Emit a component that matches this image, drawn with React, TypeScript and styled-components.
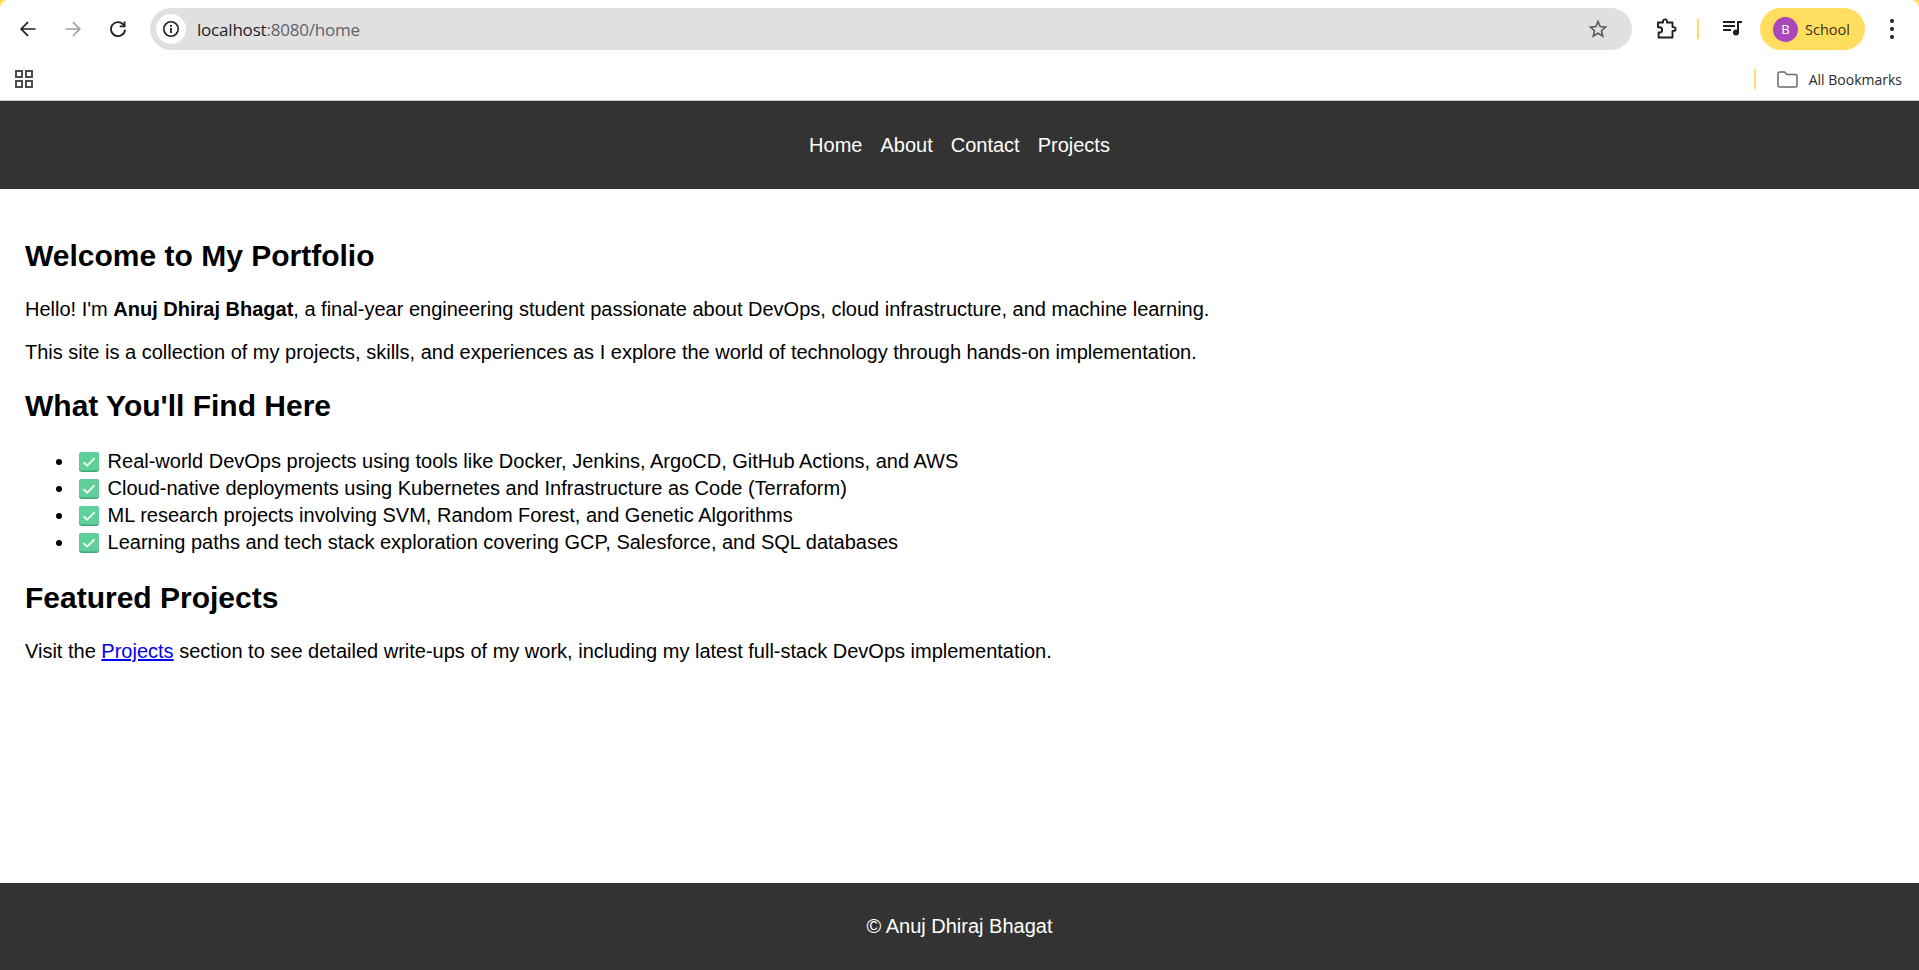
import styled, { createGlobalStyle } from "styled-components";

const GlobalStyle = createGlobalStyle`
  html, body {
    margin: 0;
    padding: 0;
    height: 100%;
    background: #fff;
  }
  body {
    font-family: "Liberation Sans", Arial, sans-serif;
    overflow: hidden;
  }
  * {
    box-sizing: border-box;
  }
`;

const features = [
  "Real-world DevOps projects using tools like Docker, Jenkins, ArgoCD, GitHub Actions, and AWS",
  "Cloud-native deployments using Kubernetes and Infrastructure as Code (Terraform)",
  "ML research projects involving SVM, Random Forest, and Genetic Algorithms",
  "Learning paths and tech stack exploration covering GCP, Salesforce, and SQL databases",
];

const navLinks = ["Home", "About", "Contact", "Projects"];

function CheckEmoji() {
  return (
    <EmojiBox>
      <svg width="20" height="20" viewBox="0 0 20 20">
        <rect x="0" y="0" width="20" height="20" rx="3" fill="#3fa77a" />
        <rect x="0" y="0" width="20" height="18.5" rx="3" fill="#5fd09a" />
        <path d="M4.5 10.2 L8.2 13.6 L15.5 6.2" fill="none" stroke="#e6f7ee" strokeWidth="2" />
      </svg>
    </EmojiBox>
  );
}

export default function App() {
  return (
    <Page>
      <GlobalStyle />
      <Chrome>
        <CornerLeft />
        <CornerRight />
        <Toolbar>
          <NavButtons>
            <IconSlot>
              <svg width="20" height="20" viewBox="0 0 20 20" fill="none" stroke="#1f1f1f" strokeWidth="1.7">
                <path d="M17.5 10H3.5M10 3.2 3.2 10l6.8 6.8" />
              </svg>
            </IconSlot>
            <IconSlot>
              <svg width="20" height="20" viewBox="0 0 20 20" fill="none" stroke="#a3a3a3" strokeWidth="1.7">
                <path d="M2.5 10h14M10 3.2l6.8 6.8-6.8 6.8" />
              </svg>
            </IconSlot>
            <IconSlot>
              <svg width="20" height="20" viewBox="0 0 20 20" fill="none" stroke="#1f1f1f" strokeWidth="1.8">
                <path d="M15.8 6.2A7 7 0 1 0 17 10.6" />
                <path d="M16.6 2.4v4.9h-4.9" />
              </svg>
            </IconSlot>
          </NavButtons>
          <Omnibox>
            <InfoBadge>
              <svg width="18" height="18" viewBox="0 0 18 18" fill="none">
                <circle cx="9" cy="9" r="7.2" stroke="#1f1f1f" strokeWidth="1.6" />
                <rect x="8.1" y="8" width="1.8" height="5" fill="#1f1f1f" />
                <rect x="8.1" y="5" width="1.8" height="1.8" fill="#1f1f1f" />
              </svg>
            </InfoBadge>
            <UrlText>
              localhost<UrlMuted>:8080/home</UrlMuted>
            </UrlText>
            <StarSlot>
              <svg width="20" height="20" viewBox="0 0 20 20" fill="none" stroke="#5a5a5a" strokeWidth="1.6">
                <path d="M10 2.6l2.2 5 5.4.5-4.1 3.6 1.2 5.3L10 14.2 5.3 17l1.2-5.3L2.4 8.1l5.4-.5z" />
              </svg>
            </StarSlot>
          </Omnibox>
          <ToolbarRight>
            <ExtensionSlot>
              <svg width="22" height="22" viewBox="0 0 22 22" fill="none" stroke="#1f1f1f" strokeWidth="1.9" strokeLinejoin="round">
                <path d="M3 4.5h5V3.4a2 2 0 0 1 4 0v1.1h5.5v4.6h1.2a1.9 1.9 0 0 1 0 3.8h-1.2V19.5H3.6v-5a0 0 0 0 0 0 0h.9a2.6 2.6 0 0 0 0-5.2H3z" />
              </svg>
            </ExtensionSlot>
            <YellowDivider />
            <MediaSlot>
              <svg width="20" height="20" viewBox="0 0 20 20" fill="#1f1f1f">
                <rect x="0" y="3" width="12" height="2" />
                <rect x="0" y="7" width="12" height="2" />
                <rect x="0" y="11" width="8" height="2" />
                <rect x="14" y="3" width="2" height="11" />
                <rect x="14" y="3" width="5" height="2" />
                <circle cx="13" cy="14.5" r="3" />
              </svg>
            </MediaSlot>
            <ProfilePill>
              <Avatar>B</Avatar>
              <ProfileName>School</ProfileName>
            </ProfilePill>
            <MenuDots>
              <Dot />
              <Dot />
              <Dot />
            </MenuDots>
          </ToolbarRight>
        </Toolbar>
        <BookmarksBar>
          <svg width="18" height="18" viewBox="0 0 18 18" fill="none" stroke="#444" strokeWidth="1.9">
            <rect x="1" y="1" width="6" height="6" />
            <rect x="11" y="1" width="6" height="6" />
            <rect x="1" y="11" width="6" height="6" />
            <rect x="11" y="11" width="6" height="6" />
          </svg>
          <BookmarksRight>
            <BookmarkDivider />
            <svg width="21" height="17" viewBox="0 0 21 17" fill="none" stroke="#6a6a6a" strokeWidth="1.5">
              <path d="M1 2.6a1.6 1.6 0 0 1 1.6-1.6h5l2.2 2.4h8.6A1.6 1.6 0 0 1 20 5v9.4a1.6 1.6 0 0 1-1.6 1.6H2.6A1.6 1.6 0 0 1 1 14.4z" />
            </svg>
            <BookmarkLabel>All Bookmarks</BookmarkLabel>
          </BookmarksRight>
        </BookmarksBar>
      </Chrome>
      <Site>
        <TopNav>
          {navLinks.map((link) => (
            <NavLink key={link}>{link}</NavLink>
          ))}
        </TopNav>
        <Main>
          <Heading>Welcome to My Portfolio</Heading>
          <Para>
            Hello! I'm <strong>Anuj Dhiraj Bhagat</strong>, a final-year engineering student passionate about DevOps,
            cloud infrastructure, and machine learning.
          </Para>
          <Para>
            This site is a collection of my projects, skills, and experiences as I explore the world of technology
            through hands-on implementation.
          </Para>
          <Heading>What You'll Find Here</Heading>
          <FeatureList>
            {features.map((item) => (
              <FeatureItem key={item}>
                <CheckEmoji /> {item}
              </FeatureItem>
            ))}
          </FeatureList>
          <Heading>Featured Projects</Heading>
          <Para>
            Visit the <ProjectLink href="#">Projects</ProjectLink> section to see detailed write-ups of my work,
            including my latest full-stack DevOps implementation.
          </Para>
        </Main>
        <Footer>© Anuj Dhiraj Bhagat</Footer>
      </Site>
    </Page>
  );
}

const Page = styled.div`
  display: flex;
  flex-direction: column;
  height: 970px;
`;

const Chrome = styled.header`
  position: relative;
  height: 101px;
  background: #fff;
  border-bottom: 1px solid #c9c9c9;
  font-family: "Open Sans", "Noto Sans", sans-serif;
`;

const CornerLeft = styled.div`
  position: absolute;
  top: 0;
  left: 0;
  width: 8px;
  height: 8px;
  background: radial-gradient(circle at 100% 100%, transparent 7.5px, #ffdd5e 8px);
`;

const CornerRight = styled.div`
  position: absolute;
  top: 0;
  right: 0;
  width: 8px;
  height: 8px;
  background: radial-gradient(circle at 0 100%, transparent 7.5px, #ffdd5e 8px);
`;

const Toolbar = styled.div`
  display: flex;
  align-items: center;
  height: 58px;
  padding-left: 5px;
`;

const NavButtons = styled.div`
  display: flex;
  width: 145px;
`;

const IconSlot = styled.div`
  display: flex;
  align-items: center;
  justify-content: center;
  width: 45px;
  height: 30px;
`;

const Omnibox = styled.div`
  display: flex;
  align-items: center;
  flex: 1;
  height: 42px;
  padding: 0 14px 0 6px;
  border-radius: 21px;
  background: #e0e0e0;
`;

const InfoBadge = styled.div`
  display: flex;
  align-items: center;
  justify-content: center;
  width: 30px;
  height: 30px;
  border-radius: 50%;
  background: #fff;
`;

const UrlText = styled.div`
  flex: 1;
  margin-left: 11px;
  font-size: 17px;
  letter-spacing: -0.2px;
  color: #1f1f1f;
`;

const UrlMuted = styled.span`
  color: #5f6368;
`;

const StarSlot = styled.div`
  display: flex;
  align-items: center;
  justify-content: center;
  width: 22px;
  margin-right: 9px;
`;

const ToolbarRight = styled.div`
  display: flex;
  align-items: center;
  width: 287px;
`;

const ExtensionSlot = styled.div`
  display: flex;
  justify-content: center;
  width: 22px;
  margin-left: 23px;
`;

const YellowDivider = styled.div`
  width: 2px;
  height: 20px;
  margin-left: 20px;
  background: #ffdd5e;
`;

const MediaSlot = styled.div`
  display: flex;
  justify-content: center;
  width: 20px;
  margin-left: 24px;
  margin-bottom: 3px;
`;

const ProfilePill = styled.div`
  display: flex;
  align-items: center;
  width: 105px;
  height: 42px;
  margin-left: 17px;
  padding-left: 13px;
  border-radius: 21px;
  background: #ffdd5e;
`;

const Avatar = styled.div`
  display: flex;
  align-items: center;
  justify-content: center;
  width: 25px;
  height: 25px;
  border-radius: 50%;
  background: #ab47bc;
  color: #fff;
  font-size: 13px;
`;

const ProfileName = styled.span`
  margin-left: 7px;
  font-size: 14.5px;
  color: #3a3020;
`;

const MenuDots = styled.div`
  display: flex;
  flex-direction: column;
  gap: 4px;
  margin-left: 25px;
`;

const Dot = styled.span`
  width: 4px;
  height: 4px;
  border-radius: 50%;
  background: #1f1f1f;
`;

const BookmarksBar = styled.div`
  display: flex;
  align-items: center;
  justify-content: space-between;
  height: 42px;
  padding: 0 17px 0 15px;
`;

const BookmarksRight = styled.div`
  display: flex;
  align-items: center;
`;

const BookmarkDivider = styled.div`
  width: 2px;
  height: 20px;
  margin-right: 21px;
  background: #ffdd5e;
`;

const BookmarkLabel = styled.span`
  margin-left: 11px;
  font-size: 14px;
  color: #2a2a2a;
`;

const Site = styled.div`
  display: flex;
  flex: 1;
  flex-direction: column;
  font-size: 20px;
  color: #000;
`;

const TopNav = styled.nav`
  display: flex;
  align-items: center;
  justify-content: center;
  gap: 18px;
  height: 88px;
  background: #333;
`;

const NavLink = styled.span`
  color: #fff;
`;

const Main = styled.main`
  flex: 1;
  padding: 25px;
`;

const Heading = styled.h2`
  margin: 25px 0;
  font-size: 30px;
  font-weight: 700;
`;

const Para = styled.p`
  margin: 20px 0;
`;

const FeatureList = styled.ul`
  margin: 25px 0;
  padding-left: 50px;
`;

const FeatureItem = styled.li`
  height: 27px;
  line-height: 27px;
`;

const EmojiBox = styled.span`
  display: inline-flex;
  justify-content: center;
  align-items: center;
  width: 27px;
  height: 27px;
  vertical-align: top;
`;

const ProjectLink = styled.a`
  color: #0000ee;
`;

const Footer = styled.footer`
  display: flex;
  align-items: center;
  justify-content: center;
  height: 87px;
  background: #333;
  color: #fff;
`;
